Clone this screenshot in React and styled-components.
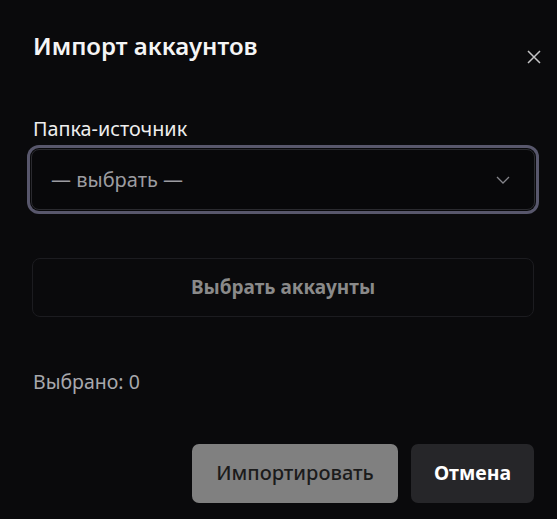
import React from "react";
import styled, { createGlobalStyle } from "styled-components";

const Global = createGlobalStyle`
  html, body { margin: 0; padding: 0; background: #0a0a0c; }
  body { font-family: "Noto Sans", "Open Sans", sans-serif; color: #f2f2f2; }
  * { box-sizing: border-box; }
`;

const Dialog = styled.div`
  width: 557px;
  height: 519px;
  background: #0a0a0c;
  padding: 30px 22px 0 31px;
  display: flex;
  flex-direction: column;
`;

const Header = styled.div`
  display: flex;
  justify-content: space-between;
  align-items: flex-start;
  height: 87px;
`;

const Title = styled.h2`
  margin: 0;
  padding-left: 2px;
  font-size: 24px;
  font-weight: 600;
  line-height: 32px;
  color: #f5f5f5;
`;

const Close = styled.button`
  margin-top: 20px;
  margin-right: -6px;
  width: 14px;
  height: 14px;
  padding: 0;
  border: none;
  background: transparent;
  color: #c4c4c6;
  display: flex;
`;

const Label = styled.div`
  padding-left: 2px;
  font-size: 19.8px;
  line-height: 24px;
  color: #eeeeee;
  margin-bottom: 8px;
`;

const Select = styled.div`
  height: 61px;
  border: 1px solid #2a2a2f;
  border-radius: 8px;
  box-shadow: 0 0 0 1px #09090b, 0 0 0 4px #58576c;
  background: #08080a;
  display: flex;
  align-items: center;
  justify-content: space-between;
  padding: 0 24px 0 19px;
  font-size: 20px;
  color: #9c9ca0;
`;

const Wide = styled.button`
  margin: 48px 1px 0;
  height: 59px;
  border: 1px solid #1c1c20;
  border-radius: 8px;
  background: #0a0a0c;
  color: #8a8a8a;
  font-family: inherit;
  font-size: 19px;
  font-weight: 700;
  padding: 0 0 2px;
`;

const Count = styled.div`
  margin-top: 53px;
  padding-left: 2px;
  font-size: 19.5px;
  line-height: 24px;
  color: #a8a8ac;
`;

const Footer = styled.div`
  margin-top: 50px;
  display: flex;
  justify-content: flex-end;
  gap: 13px;
  padding-right: 1px;
`;

const Btn = styled.button`
  height: 59px;
  padding: 0 0 2px;
  width: ${(p) => p.$w}px;
  border: none;
  border-radius: 7px;
  font-family: inherit;
  font-size: ${(p) => (p.$primary ? 20 : 19.5)}px;
  background: ${(p) => (p.$primary ? "#808080" : "#262629")};
  color: ${(p) => (p.$primary ? "#1b1b1b" : "#ffffff")};
  font-weight: ${(p) => (p.$primary ? 500 : 700)};
`;

export default function App() {
  return (
    <>
      <Global />
      <Dialog>
        <Header>
          <Title>Импорт аккаунтов</Title>
          <Close aria-label="close">
            <svg width="14" height="14" viewBox="0 0 14 14" fill="none" stroke="currentColor" strokeWidth="1.5">
              <path d="M1 1 L13 13 M13 1 L1 13" />
            </svg>
          </Close>
        </Header>
        <Label>Папка-источник</Label>
        <Select>
          <span>— выбрать —</span>
          <svg width="14" height="8" viewBox="0 0 14 8" fill="none" stroke="#85858b" strokeWidth="1.3">
            <path d="M1 1 L7 7 L13 1" />
          </svg>
        </Select>
        <Wide>Выбрать аккаунты</Wide>
        <Count>Выбрано: 0</Count>
        <Footer>
          <Btn $primary $w={206}>Импортировать</Btn>
          <Btn $w={123}>Отмена</Btn>
        </Footer>
      </Dialog>
    </>
  );
}
